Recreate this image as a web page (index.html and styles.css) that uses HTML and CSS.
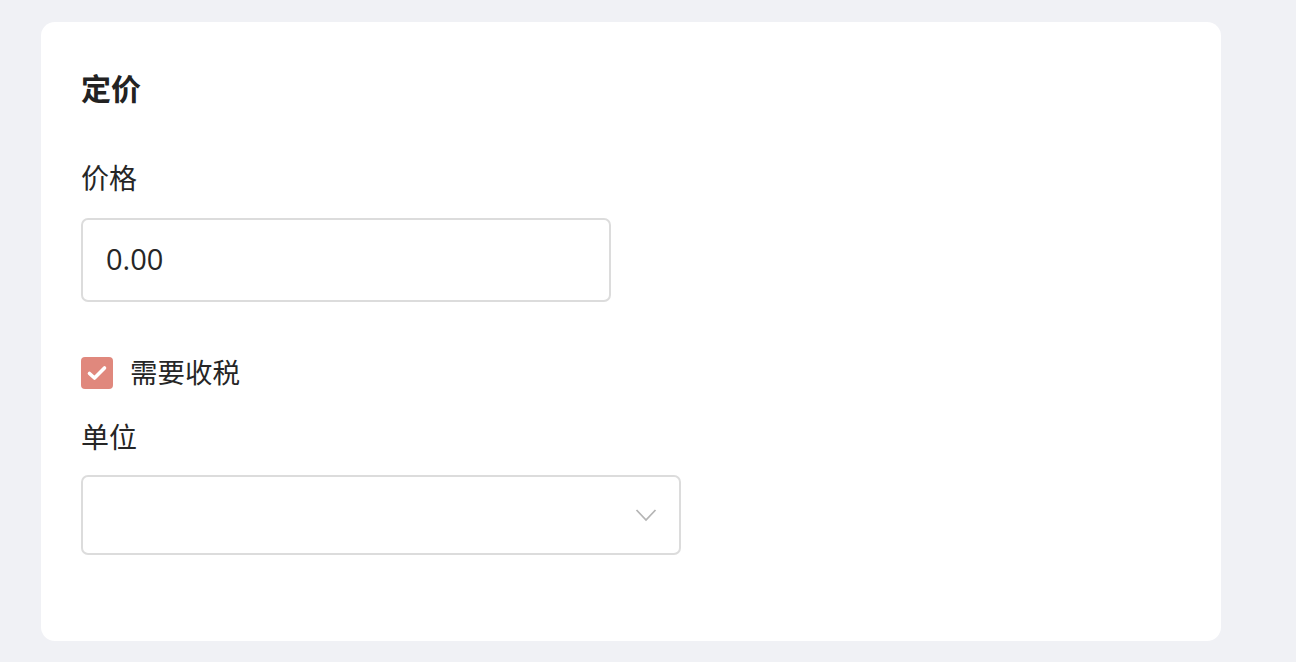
FILE: index.html
```html
<!DOCTYPE html>
<html lang="zh">
<head>
<meta charset="utf-8">
<link rel="stylesheet" href="styles.css">
</head>
<body>
<div class="page">
  <div class="card">
    <h2 class="title">定价</h2>
    <div class="field">
      <label class="label">价格</label>
      <div class="input">0.00</div>
    </div>
    <div class="check-row">
      <span class="checkbox">
        <svg width="22" height="18" viewBox="0 0 22 18"><path d="M3.5 9.5 L8.5 14 L18.5 4" fill="none" stroke="#fff" stroke-width="3.6" stroke-linecap="round" stroke-linejoin="round"/></svg>
      </span>
      <span class="check-label">需要收税</span>
    </div>
    <div class="field unit">
      <label class="label">单位</label>
      <div class="select">
        <svg class="chev" width="22" height="14" viewBox="0 0 22 14"><path d="M1.5 2 L11 12 L20.5 2" fill="none" stroke="#b5b5b5" stroke-width="1.8"/></svg>
      </div>
    </div>
  </div>
</div>
</body>
</html>
```
FILE: styles.css
```css
html, body {
  margin: 0;
  padding: 0;
  background: #f0f1f5;
  font-family: "Noto Sans CJK SC", "Noto Sans", sans-serif;
  color: #262626;
}
.page {
  padding: 22px 0 0 41px;
  height: 640px;
}
.card {
  box-sizing: border-box;
  width: 1180px;
  height: 619px;
  background: #fff;
  border-radius: 14px;
  padding: 45px 40px 0 40px;
}
.title {
  margin: 0;
  font-size: 30px;
  font-weight: 700;
  line-height: 40px;
  color: #222;
}
.field {
  display: flex;
  flex-direction: column;
}
.label {
  font-size: 28px;
  line-height: 36px;
  margin-top: 52px;
  margin-bottom: 23px;
}
.input {
  box-sizing: border-box;
  width: 530px;
  height: 84px;
  border: 2px solid #dcdcdc;
  border-radius: 7px;
  padding-left: 23px;
  padding-bottom: 3px;
  font-family: "Open Sans", "Noto Sans", sans-serif;
  font-size: 29px;
  display: flex;
  align-items: center;
}
.check-row {
  display: flex;
  align-items: center;
  margin-top: 53px;
  height: 36px;
}
.checkbox {
  width: 32px;
  height: 32px;
  border-radius: 4px;
  background: #e0887d;
  display: flex;
  align-items: center;
  justify-content: center;
}
.check-label {
  font-size: 27.5px;
  margin-left: 17px;
  line-height: 36px;
  margin-top: -4px;
}
.unit .label {
  margin-top: 27px;
  margin-bottom: 21px;
}
.select {
  box-sizing: border-box;
  width: 600px;
  height: 80px;
  border: 2px solid #dcdcdc;
  border-radius: 7px;
  display: flex;
  align-items: center;
  justify-content: flex-end;
  padding-right: 22px;
}
```
